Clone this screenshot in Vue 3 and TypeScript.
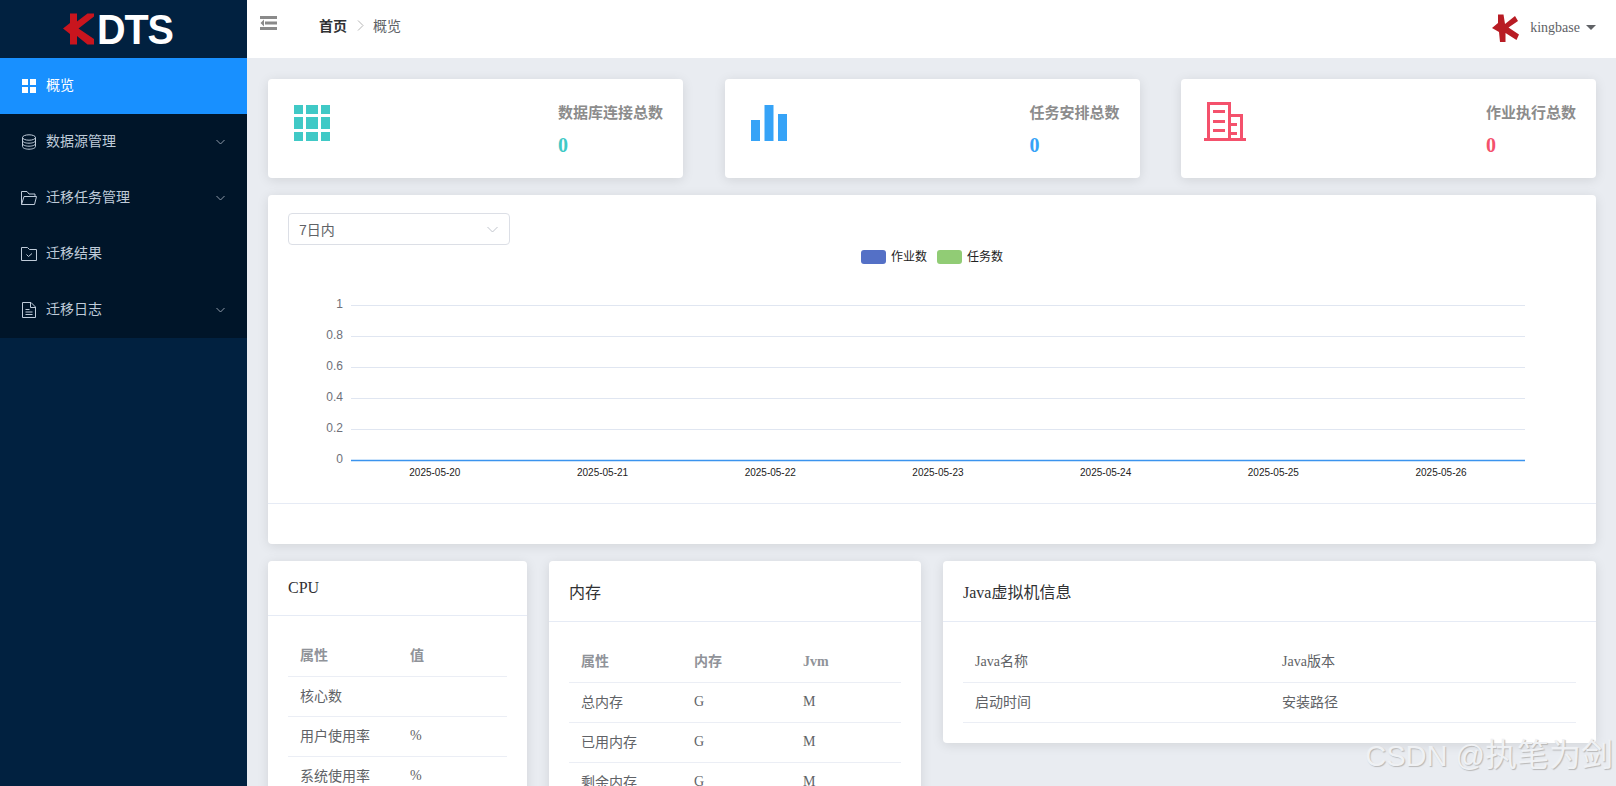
<script setup lang="ts">
interface MenuItem { label: string; icon: string; arrow: boolean; active?: boolean }
const menu: MenuItem[] = [
  { label: '概览', icon: 'grid', arrow: false, active: true },
  { label: '数据源管理', icon: 'db', arrow: true },
  { label: '迁移任务管理', icon: 'folder', arrow: true },
  { label: '迁移结果', icon: 'check', arrow: false },
  { label: '迁移日志', icon: 'doc', arrow: true },
]
const yTicks = [
  { label: '1', y: 60.5 },
  { label: '0.8', y: 91.5 },
  { label: '0.6', y: 122.5 },
  { label: '0.4', y: 153.5 },
  { label: '0.2', y: 184.5 },
]
const dates = ['2025-05-20', '2025-05-21', '2025-05-22', '2025-05-23', '2025-05-24', '2025-05-25', '2025-05-26']
const dateX = (i: number) => 83 + 83.85 + i * 167.7
const cpuRows = [
  ['核心数', ''],
  ['用户使用率', '%'],
  ['系统使用率', '%'],
]
const memRows = [
  ['总内存', 'G', 'M'],
  ['已用内存', 'G', 'M'],
  ['剩余内存', 'G', 'M'],
]
</script>

<template>
  <div class="app">
    <aside class="sidebar">
      <div class="logo">
        <svg class="logo-k" width="32" height="32" viewBox="0 0 32 32">
          <polygon fill="#c9151e" points="7,0.5 14,0.5 14,8.5 24.5,0.5 31,0.5 31,3.5 15.5,15.5 31,26 31,31.5 24.5,31.5 14,23 14,31.5 7,31.5 7,21 0,15.5 7,10" />
        </svg>
        <span class="logo-text">DTS</span>
      </div>
      <ul class="menu">
        <li v-for="item in menu" :key="item.label" class="menu-item" :class="{ active: item.active }">
          <svg class="menu-icon" width="16" height="16" viewBox="0 0 16 16" fill="none" stroke="currentColor" stroke-width="1">
            <g v-if="item.icon === 'grid'" fill="#fff" stroke="none">
              <rect x="1" y="1" width="6" height="6" />
              <rect x="9" y="1" width="6" height="6" />
              <rect x="1" y="9" width="6" height="6" />
              <rect x="9" y="9" width="6" height="6" />
            </g>
            <g v-else-if="item.icon === 'db'">
              <ellipse cx="8" cy="3.5" rx="6.5" ry="2.7" />
              <path d="M1.5 3.5v9c0 1.5 2.9 2.7 6.5 2.7s6.5-1.2 6.5-2.7v-9" />
              <path d="M1.5 6.5c0 1.5 2.9 2.7 6.5 2.7s6.5-1.2 6.5-2.7" />
              <path d="M1.5 9.5c0 1.5 2.9 2.7 6.5 2.7s6.5-1.2 6.5-2.7" />
            </g>
            <g v-else-if="item.icon === 'folder'">
              <path d="M0.5 14.5V1.5h5.5l2 2.5h6v2.5" />
              <path d="M0.5 14.5l2.5-8h12.5l-2 8z" />
            </g>
            <g v-else-if="item.icon === 'check'">
              <path d="M0.5 1.5h6l2 2h7v11h-15z" />
              <path d="M5.5 8.5l2 2 3.5-3" />
            </g>
            <g v-else>
              <path d="M1.5 0.5h8.5l4.5 4.5v10.5h-13z" />
              <path d="M9.5 0.5v5h5M4.5 7.5h4M4.5 10h7M4.5 12.5h7" />
            </g>
          </svg>
          <span class="menu-label">{{ item.label }}</span>
          <svg v-if="item.arrow" class="menu-arrow" width="9" height="6" viewBox="0 0 9 6" fill="none" stroke="currentColor">
            <path d="M0.5 1l4 4 4-4" />
          </svg>
        </li>
      </ul>
    </aside>

    <div class="main">
      <header class="topbar">
        <svg class="hamburger" width="18" height="14" viewBox="0 0 18 14">
          <g fill="#8a8a8a">
            <rect x="0" y="0" width="17" height="3" />
            <rect x="5" y="5.5" width="12" height="3" />
            <rect x="0" y="11" width="17" height="3" />
            <polygon points="4,3.5 4,10.5 0.5,7" />
          </g>
        </svg>
        <nav class="crumbs">
          <span class="crumb-home">首页</span>
          <svg class="crumb-sep" width="7" height="11" viewBox="0 0 7 11" fill="none" stroke="#b5b5b5">
            <path d="M1 0.5l5 5-5 5" />
          </svg>
          <span class="crumb-now">概览</span>
        </nav>
        <div class="user">
          <svg class="user-k" width="28" height="28" viewBox="0 0 28 28">
            <polygon fill="#b81c24" points="6,0.5 11.5,0.5 13,10 23,2 26,7 16.5,13.5 27,20.5 24.5,26 13.5,19 13.5,28 8,28 7,18 0,14 6,9" />
          </svg>
          <span class="user-name">kingbase</span>
          <span class="caret"></span>
        </div>
      </header>

      <main class="content">
        <section class="stats">
          <div class="card stat">
            <svg width="36" height="36" viewBox="0 0 36 36" fill="#40c9c6">
              <rect x="0" y="0" width="9" height="9" /><rect x="12" y="0" width="12" height="9" /><rect x="27" y="0" width="9" height="9" />
              <rect x="0" y="12" width="9" height="12" /><rect x="12" y="12" width="12" height="12" /><rect x="27" y="12" width="9" height="12" />
              <rect x="0" y="27" width="9" height="9" /><rect x="12" y="27" width="12" height="9" /><rect x="27" y="27" width="9" height="9" />
            </svg>
            <div class="stat-text">
              <div class="stat-title">数据库连接总数</div>
              <div class="stat-num teal">0</div>
            </div>
          </div>
          <div class="card stat">
            <svg width="36" height="36" viewBox="0 0 36 36" fill="#36a3f7">
              <rect x="0" y="15" width="9" height="21" />
              <rect x="13.5" y="0" width="9" height="36" />
              <rect x="27" y="9" width="9" height="27" />
            </svg>
            <div class="stat-text">
              <div class="stat-title">任务安排总数</div>
              <div class="stat-num blue">0</div>
            </div>
          </div>
          <div class="card stat">
            <svg class="stat-building" width="42" height="39" viewBox="0 0 42 39" fill="#f4516c">
              <path d="M3 0h24v36h-3V3H6v33H3z" />
              <path d="M27 12h12v24h-3V15h-9z" />
              <rect x="0" y="36" width="42" height="3" />
              <rect x="9" y="8" width="12" height="3" />
              <rect x="9" y="18" width="12" height="3" />
              <rect x="9" y="27" width="12" height="3" />
              <rect x="27" y="21" width="6" height="3" />
              <rect x="27" y="30" width="6" height="3" />
            </svg>
            <div class="stat-text">
              <div class="stat-title">作业执行总数</div>
              <div class="stat-num red">0</div>
            </div>
          </div>
        </section>

        <section class="card chart-card">
          <div class="select">
            <span>7日内</span>
            <svg width="11" height="7" viewBox="0 0 11 7" fill="none" stroke="#c0c4cc">
              <path d="M0.5 1l5 5 5-5" />
            </svg>
          </div>
          <svg class="chart" width="1328" height="258" viewBox="0 0 1328 258">
            <rect x="593" y="5" width="25" height="14" rx="3" fill="#5470c6" />
            <text x="623" y="16" class="legend">作业数</text>
            <rect x="669" y="5" width="25" height="14" rx="3" fill="#91cc75" />
            <text x="699" y="16" class="legend">任务数</text>
            <g v-for="t in yTicks" :key="t.label">
              <line x1="83" x2="1257" :y1="t.y" :y2="t.y" stroke="#e0e6f1" />
              <text x="75" :y="t.y + 2.5" class="y-label">{{ t.label }}</text>
            </g>
            <text x="75" y="218" class="y-label">0</text>
            <line x1="83" x2="1257" y1="215.5" y2="215.5" stroke="#3b94ee" stroke-width="1.5" />
            <text v-for="(d, i) in dates" :key="d" :x="dateX(i)" y="230.5" class="x-label">{{ d }}</text>
          </svg>
          <div class="chart-foot"></div>
        </section>

        <section class="panels">
          <div class="card panel">
            <div class="panel-head cpu-head">CPU</div>
            <div class="panel-body">
              <table class="tbl">
                <colgroup><col style="width: 110px" /><col /></colgroup>
                <tr><th class="cjk">属性</th><th class="cjk">值</th></tr>
                <tr v-for="r in cpuRows" :key="r[0]"><td class="cjk">{{ r[0] }}</td><td>{{ r[1] }}</td></tr>
              </table>
            </div>
          </div>
          <div class="card panel">
            <div class="panel-head">内存</div>
            <div class="panel-body">
              <table class="tbl">
                <colgroup><col style="width: 113px" /><col style="width: 109px" /><col /></colgroup>
                <tr><th class="cjk">属性</th><th class="cjk">内存</th><th>Jvm</th></tr>
                <tr v-for="r in memRows" :key="r[0]"><td class="cjk">{{ r[0] }}</td><td>{{ r[1] }}</td><td>{{ r[2] }}</td></tr>
              </table>
            </div>
          </div>
          <div class="card panel java">
            <div class="panel-head">Java虚拟机信息</div>
            <div class="panel-body">
              <table class="tbl">
                <colgroup><col style="width: 307px" /><col /></colgroup>
                <tr><td class="cjk">Java名称</td><td class="cjk">Java版本</td></tr>
                <tr><td class="cjk">启动时间</td><td class="cjk">安装路径</td></tr>
              </table>
            </div>
          </div>
        </section>
      </main>
    </div>
    <div class="watermark"><span class="wm-latin">CSDN @</span>执笔为剑</div>
  </div>
</template>

<style>
html, body { margin: 0; height: 100%; overflow: hidden; }
</style>

<style scoped>
.app {
  position: relative;
  display: flex;
  height: 786px;
  overflow: hidden;
  font-family: "Liberation Serif", "Noto Sans CJK SC", serif;
  font-size: 14px;
}
.sidebar {
  flex: 0 0 247px;
  background: #012140;
  font-family: "Liberation Sans", "Noto Sans CJK SC", sans-serif;
}
.logo {
  height: 58px;
  display: flex;
  align-items: center;
  padding-left: 63px;
  box-sizing: border-box;
}
.logo-k { margin-top: -1px; flex: none; }
.logo-text {
  margin-left: 2px;
  color: #fff;
  font: bold 43px/1 "Liberation Sans", sans-serif;
  letter-spacing: -1.2px;
  transform: scaleX(0.92);
  transform-origin: left center;
}
.menu { list-style: none; margin: 0; padding: 0; background: #001529; }
.menu-item {
  height: 56px;
  display: flex;
  align-items: center;
  padding: 0 22px;
  color: #bfcbd9;
}
.menu-item.active { background: #1890ff; color: #fff; }
.menu-icon { flex: none; margin-left: -1px; }
.menu-label { margin: -5px 0 0 9px; flex: 1; }
.menu-arrow { flex: none; color: #8d99a8; }
.main { flex: 1; min-width: 0; display: flex; flex-direction: column; }
.topbar {
  height: 58px;
  flex: none;
  background: #fff;
  display: flex;
  align-items: flex-start;
  padding: 0 20px 0 13px;
  box-sizing: border-box;
}
.hamburger { margin-top: 16px; flex: none; }
.crumbs {
  display: flex;
  align-items: center;
  height: 50px;
  margin-left: 41px;
  font-family: "Liberation Sans", "Noto Sans CJK SC", sans-serif;
}
.crumb-home { font-weight: 700; color: #303133; }
.crumb-sep { margin: 0 9px 0 10px; }
.crumb-now { color: #606266; }
.user { margin-left: auto; display: flex; align-items: center; height: 56px; }
.user-k { flex: none; }
.user-name { margin-left: 10px; color: #606266; }
.caret {
  margin: -2px 0 0 6px;
  border: 5px solid transparent;
  border-top-color: #606266;
  border-bottom-width: 0;
}
.content {
  flex: 1;
  min-height: 0;
  background: #e9ecf1;
  padding: 21px 20px 0 21px;
  overflow: hidden;
}
.card {
  background: #fff;
  border-radius: 4px;
  box-shadow: 0 2px 12px rgba(0, 0, 0, 0.1);
}
.stats {
  display: grid;
  grid-template-columns: repeat(3, 415px);
  justify-content: space-between;
}
.stat {
  height: 99px;
  display: flex;
  justify-content: space-between;
  align-items: flex-start;
  padding: 26px 20px 0 26px;
  box-sizing: border-box;
}
.stat-building { margin: -3px 0 0 -3px; }
.stat-text { margin-top: -3px; }
.stat-title {
  font: 700 15px/22px "Liberation Sans", "Noto Sans CJK SC", sans-serif;
  color: #8c8c8c;
}
.stat-num { font-size: 20px; font-weight: 700; line-height: 24px; margin-top: 9px; }
.teal { color: #40c9c6; }
.blue { color: #36a3f7; }
.red { color: #f4516c; }
.chart-card { height: 349px; margin-top: 17px; padding-top: 18px; box-sizing: border-box; }
.select {
  width: 222px;
  height: 32px;
  margin-left: 20px;
  box-sizing: border-box;
  border: 1px solid #dcdfe6;
  border-radius: 4px;
  padding: 0 11px 0 10px;
  display: flex;
  align-items: center;
  justify-content: space-between;
  color: #606266;
  font-family: "Liberation Sans", "Noto Sans CJK SC", sans-serif;
}
.chart { display: block; overflow: visible; }
.legend { font: 12px "Liberation Sans", "Noto Sans CJK SC", sans-serif; fill: #222; }
.y-label { font: 12px "Liberation Sans", sans-serif; fill: #6e7079; text-anchor: end; }
.x-label { font: 10px "Liberation Sans", sans-serif; fill: #222; text-anchor: middle; }
.chart-foot { border-top: 1px solid #e6ebf5; }
.panels {
  display: grid;
  grid-template-columns: 259px 372px 653px;
  column-gap: 22px;
  align-items: start;
  margin-top: 17px;
}
.panel-head {
  height: 61px;
  box-sizing: border-box;
  border-bottom: 1px solid #e6ebf5;
  padding: 0 20px;
  display: flex;
  align-items: center;
  font-size: 16px;
  color: #303133;
}
.cpu-head { height: 55px; }
.panel-body { padding: 20px; }
.tbl {
  width: 100%;
  table-layout: fixed;
  border-collapse: collapse;
  color: #606266;
}
.tbl td, .tbl th {
  height: 40px;
  padding: 0 12px;
  box-sizing: border-box;
  border-bottom: 1px solid #ebeef5;
  text-align: left;
  font-size: 14px;
}
.tbl th { font-weight: 700; color: #909399; }
.tbl .cjk { padding-bottom: 3px; }
.watermark {
  position: absolute;
  right: 3px;
  bottom: 12px;
  font: 32px/36px "Liberation Sans", "Noto Sans CJK SC", sans-serif;
  color: #eff1f4;
  text-shadow: 1px 1px 1px #b8b8b8;
  white-space: nowrap;
}
.wm-latin { font-size: 29px; }
</style>
